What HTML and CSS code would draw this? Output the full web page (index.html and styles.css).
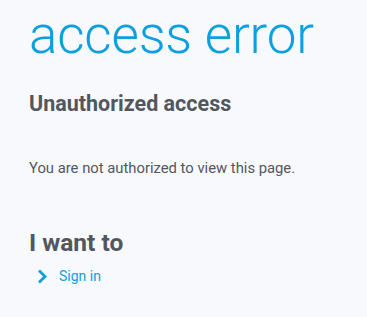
FILE: index.html
```html
<!DOCTYPE html>
<html lang="en">
<head>
    <meta charset="UTF-8">
    <meta name="viewport" content="width=device-width, initial-scale=1.0">
    <title>Access error</title>
    <link rel="stylesheet" href="styles.css">
</head>
<body>
    <div class="page">
        <h1 class="title">access error</h1>
        <h2 class="subtitle">Unauthorized access</h2>
        <p class="message">You are not authorized to view this page.</p>

        <h2 class="subtitle want">I want to</h2>
        <ul class="actions">
            <li>
                <a href="#" class="action-link">
                    <svg class="chevron" width="11" height="15" viewBox="0 0 11 15">
                        <path d="M2 1.5 L8 7.5 L2 13.5" fill="none" stroke="#0ea0de" stroke-width="2.8"/>
                    </svg>
                    Sign in
                </a>
            </li>
        </ul>
    </div>
</body>
</html>
```

FILE: styles.css
```css
body {
    margin: 0;
    background-color: #f8f9fd;
    font-family: Roboto, "Liberation Sans", sans-serif;
    color: #52575d;
}
.page {
    padding: 5px 29px;
}
.title {
    margin: 0;
    font-size: 53px;
    font-weight: 300;
    letter-spacing: -0.2px;
    color: #0ea0de;
    line-height: 60px;
    white-space: nowrap;
}
.subtitle {
    margin: 25px 0 0;
    font-size: 21.5px;
    font-weight: 700;
    line-height: 28px;
}
.want {
    margin-top: 50px;
    font-size: 24.5px;
    line-height: 30px;
}
.message {
    margin: 40px 0 0;
    font-size: 14.8px;
    line-height: 20px;
}
.actions {
    list-style: none;
    margin: 8px 0 0;
    padding: 0 0 0 8px;
}
.action-link {
    display: flex;
    align-items: center;
    gap: 11px;
    color: #0ea0de;
    text-decoration: none;
    font-size: 14px;
    line-height: 20px;
}
```
